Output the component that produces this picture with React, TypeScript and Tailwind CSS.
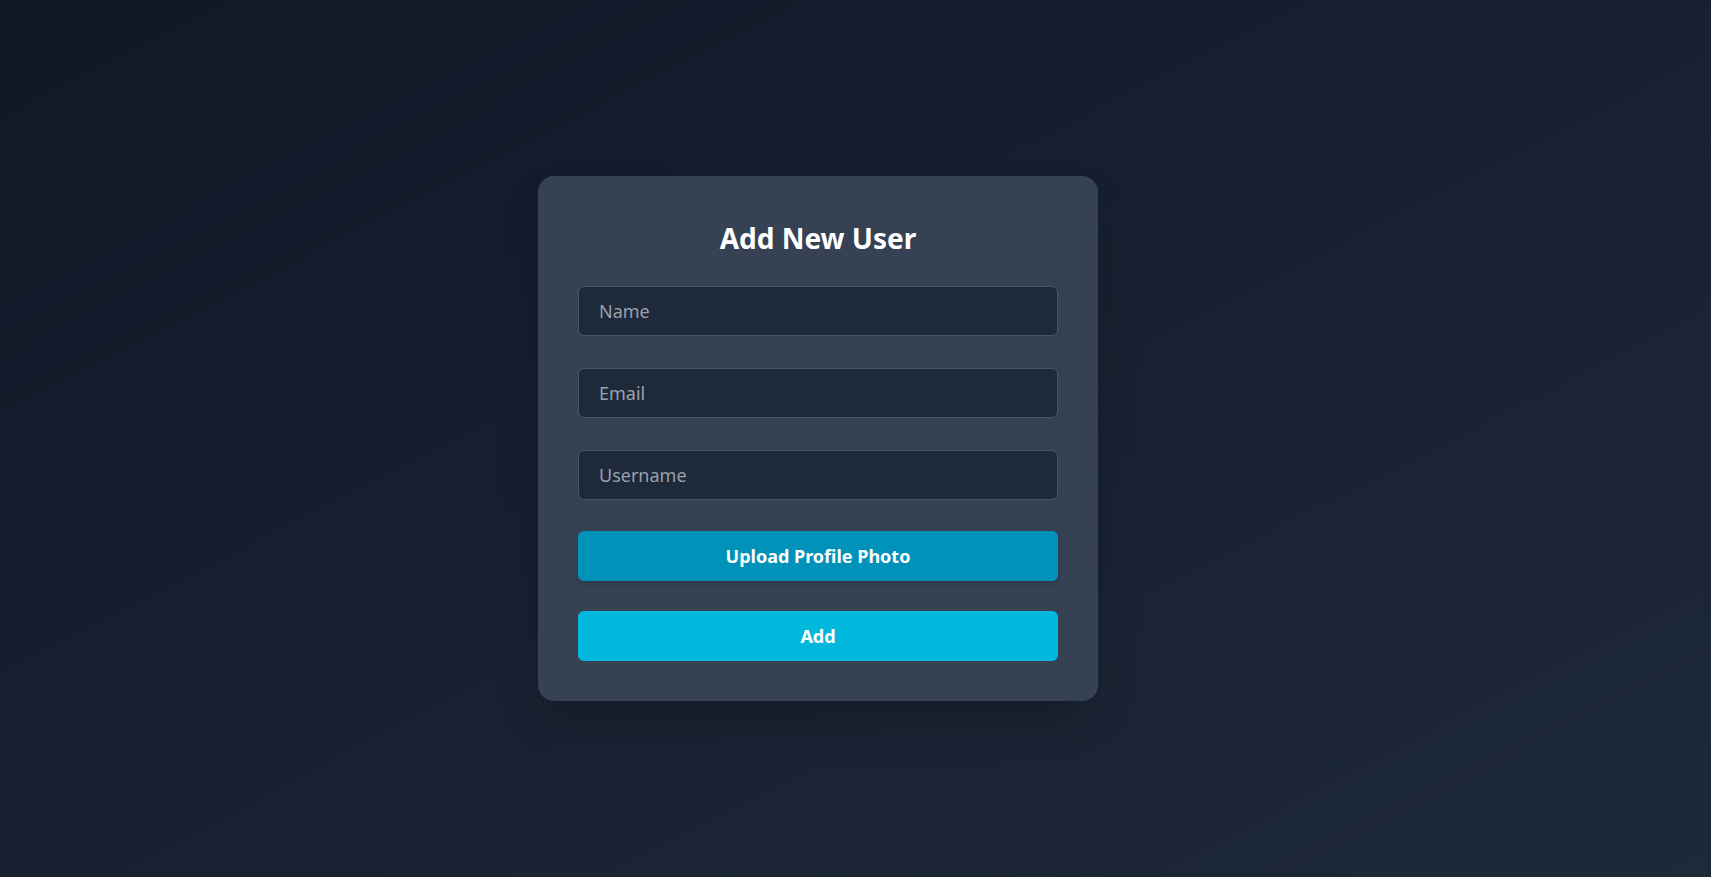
import React, { useState } from "react";

export default function App() {
  const [name, setName] = useState("");
  const [email, setEmail] = useState("");
  const [username, setUsername] = useState("");

  const inputCls =
    "w-full h-[50px] rounded-md border border-gray-600 bg-gray-800 px-5 text-[18px] text-gray-100 placeholder:text-gray-400 outline-none focus:border-cyan-500";

  return (
    <div
      className="min-h-screen w-full flex items-center justify-center pr-[75px] bg-linear-to-br from-gray-900 to-gray-800"
      style={{ fontFamily: '"Noto Sans", "Open Sans", sans-serif' }}
    >
      <div className="w-[560px] rounded-2xl bg-gray-700 p-10 shadow-2xl">
        <h2 className="text-center text-[28px] leading-[44px] font-bold text-white mb-[26px]">
          Add New User
        </h2>

        <form className="flex flex-col" onSubmit={(e) => e.preventDefault()}>
          <input
            className={`${inputCls} mb-8`}
            placeholder="Name"
            value={name}
            onChange={(e) => setName(e.target.value)}
          />
          <input
            className={`${inputCls} mb-8`}
            placeholder="Email"
            value={email}
            onChange={(e) => setEmail(e.target.value)}
          />
          <input
            className={`${inputCls} mb-[31px]`}
            placeholder="Username"
            value={username}
            onChange={(e) => setUsername(e.target.value)}
          />

          <button
            type="button"
            className="w-full h-[50px] rounded-md bg-cyan-600 text-[18px] font-bold text-white shadow-md mb-[30px]"
          >
            Upload Profile Photo
          </button>

          <button
            type="submit"
            className="w-full h-[50px] rounded-md bg-cyan-500 text-[18px] font-bold text-white"
          >
            Add
          </button>
        </form>
      </div>
    </div>
  );
}
